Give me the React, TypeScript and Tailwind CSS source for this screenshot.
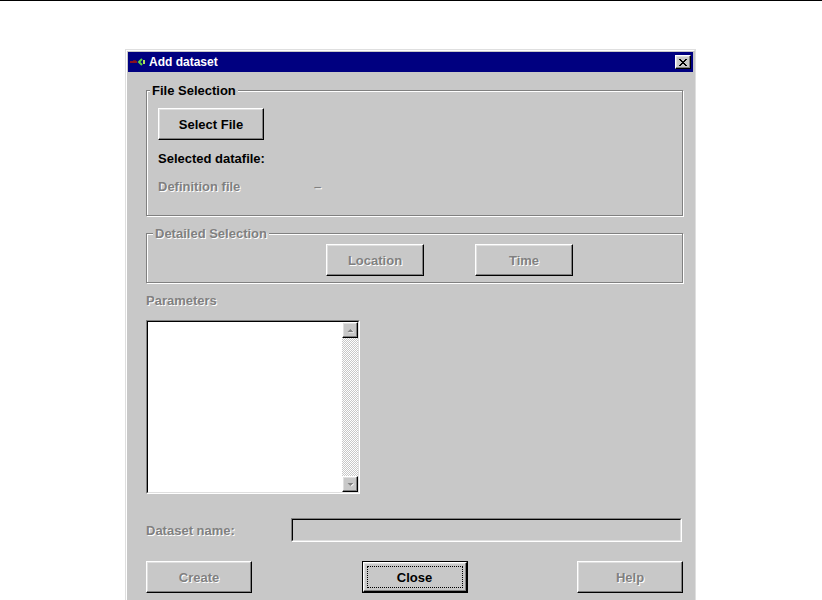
import React from "react";

const dis = "text-[#808080] [text-shadow:1px_1px_0_#ffffff]";
const raised =
  "border border-t-white border-l-white border-r-black border-b-black shadow-[inset_-1px_-1px_0_#808080,inset_1px_1px_0_#dfdfdf]";

function Btn({
  children,
  disabled,
  className,
}: {
  children: React.ReactNode;
  disabled?: boolean;
  className: string;
}) {
  return (
    <div
      className={`flex items-center justify-center bg-[#c8c8c8] text-[13px] font-bold leading-[15px] ${raised} ${
        disabled ? dis : "text-black"
      } ${className}`}
    >
      {children}
    </div>
  );
}

function GroupBox({
  label,
  labelClass,
  className,
  children,
}: {
  label: string;
  labelClass: string;
  className: string;
  children: React.ReactNode;
}) {
  return (
    <div
      className={`relative border border-[#808080] shadow-[inset_1px_1px_0_#ffffff,1px_1px_0_#ffffff] ${className}`}
    >
      <span
        className={`absolute -top-[8px] px-[2px] bg-[#c8c8c8] text-[13px] font-bold leading-[15px] ${labelClass}`}
      >
        {label}
      </span>
      {children}
    </div>
  );
}

function ArrowBtn({ up }: { up?: boolean }) {
  return (
    <div className={`w-[16px] h-[16px] flex items-center justify-center bg-[#c8c8c8] ${raised}`}>
      <svg width="7" height="5" viewBox="0 0 7 5">
        {up ? (
          <>
            <path d="M1.5 4.5 L4.5 1.5 L7.5 4.5 Z" fill="#ffffff" />
            <path d="M0.5 4 L3.5 1 L6.5 4 Z" fill="#808080" />
          </>
        ) : (
          <>
            <path d="M1.5 1.5 L4.5 4.5 L7.5 1.5 Z" fill="#ffffff" />
            <path d="M0.5 1 L3.5 4 L6.5 1 Z" fill="#808080" />
          </>
        )}
      </svg>
    </div>
  );
}

export default function App() {
  return (
    <div className="h-[600px] overflow-hidden bg-white border-t border-black font-['Liberation_Sans',Arial,sans-serif]">
      <div className="ml-[125px] mt-[48px] w-[571px] border border-[#dfdfdf]">
        <div className="border border-t-white border-l-white border-r-[#c8c8c8] border-b-[#c8c8c8] bg-[#c8c8c8] p-[1px]">
          {/* Title bar */}
          <div className="h-[20px] bg-[#000080] flex items-center pl-[2px] pr-[2px]">
            <svg width="18" height="12" viewBox="0 0 18 12" className="shrink-0">
              <rect x="0" y="5" width="7" height="2" fill="#8a1020" />
              <rect x="3" y="4" width="3" height="1" fill="#5a1030" />
              <path d="M12 3 L9 6 L12 9" stroke="#5fd040" strokeWidth="2" fill="none" />
              <rect x="13" y="4" width="2" height="4" fill="#b0e060" />
            </svg>
            <span className="ml-[1px] text-white text-[12px] font-bold leading-[14px]">Add dataset</span>
            <div className="flex-1" />
            <div className={`w-[16px] h-[14px] flex items-center justify-center bg-[#c8c8c8] ${raised}`}>
              <svg width="8" height="7" viewBox="0 0 8 7">
                <path d="M0 0h2v1h-2zM6 0h2v1h-2zM1 1h2v1h-2zM5 1h2v1h-2zM2 2h4v1h-4zM3 3h2v1h-2zM2 4h4v1h-4zM1 5h2v1h-2zM5 5h2v1h-2zM0 6h2v1h-2zM6 6h2v1h-2z" fill="#000" />
              </svg>
            </div>
          </div>

          {/* Content */}
          <div className="pl-[18px] pr-[10px] pb-[20px] flex flex-col">
            <GroupBox label="File Selection" labelClass="left-[3px] text-black" className="mt-[18px] h-[126px]">
              <div className="pl-[11px] pt-[17px] flex flex-col">
                <Btn className="w-[106px] h-[32px]">Select File</Btn>
                <div className="mt-[11px] text-[13px] font-bold leading-[15px] text-black">Selected datafile:</div>
                <div className="mt-[13px] flex text-[13px] font-bold leading-[15px]">
                  <span className={`w-[156px] ${dis}`}>Definition file</span>
                  <span className={dis}>–</span>
                </div>
              </div>
            </GroupBox>

            <GroupBox label="Detailed Selection" labelClass={`left-[6px] ${dis}`} className="mt-[17px] h-[50px]">
              <div className="pt-[10px] pl-[179px] flex gap-[51px]">
                <Btn disabled className="w-[98px] h-[32px]">Location</Btn>
                <Btn disabled className="w-[98px] h-[32px]">Time</Btn>
              </div>
            </GroupBox>

            <div className={`mt-[10px] text-[13px] font-bold leading-[15px] ${dis}`}>Parameters</div>

            {/* Listbox */}
            <div className="mt-[12px] w-[214px] h-[174px] border border-t-[#808080] border-l-[#808080] border-r-white border-b-white">
              <div className="w-full h-full border border-t-black border-l-black border-r-[#dfdfdf] border-b-[#dfdfdf] flex">
                <div className="flex-1 bg-white" />
                <div className="w-[16px] flex flex-col">
                  <ArrowBtn up />
                  <div className="flex-1 [background-image:repeating-conic-gradient(#c8c8c8_0%_25%,#ffffff_0%_50%)] [background-size:2px_2px]" />
                  <ArrowBtn />
                </div>
              </div>
            </div>

            {/* Dataset name */}
            <div className="mt-[24px] flex items-center">
              <span className={`w-[145px] text-[13px] font-bold leading-[15px] ${dis}`}>Dataset name:</span>
              <div className="flex-1 mr-[1px] h-[24px] border border-t-[#808080] border-l-[#808080] border-r-white border-b-white">
                <div className="w-full h-full border border-t-black border-l-black border-r-[#dfdfdf] border-b-[#dfdfdf] bg-[#c8c8c8]" />
              </div>
            </div>

            {/* Buttons */}
            <div className="mt-[19px] flex justify-between">
              <Btn disabled className="w-[106px] h-[32px]">Create</Btn>
              <div className="w-[106px] h-[32px] border border-black">
                <div className={`relative w-full h-full flex items-center justify-center bg-[#c8c8c8] text-[13px] font-bold leading-[15px] text-black ${raised}`}>
                  <span className="absolute inset-[3px] border border-dotted border-black" />
                  <span className="relative">Close</span>
                </div>
              </div>
              <Btn disabled className="w-[106px] h-[32px]">Help</Btn>
            </div>
          </div>
        </div>
      </div>
    </div>
  );
}
